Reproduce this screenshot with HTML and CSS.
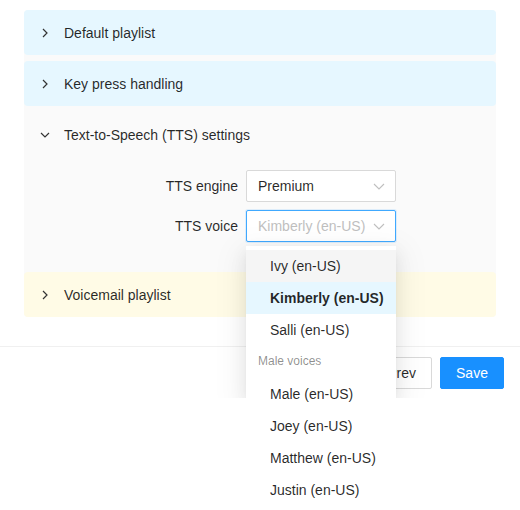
FILE: index.html
```html
<!DOCTYPE html>
<html>
<head>
<meta charset="utf-8">
<title>TTS settings</title>
<link rel="stylesheet" href="styles.css">
</head>
<body>
<div class="modal">
  <div class="modal-body">
    <div class="collapse">
      <div class="panel blue">
        <div class="head">
          <svg class="arrow" width="10" height="10" viewBox="0 0 10 10"><path d="M3 1 L7 5 L3 9" fill="none" stroke="#333" stroke-width="1.2"/></svg>
          Default playlist
        </div>
      </div>
      <div class="panel blue">
        <div class="head">
          <svg class="arrow" width="10" height="10" viewBox="0 0 10 10"><path d="M3 1 L7 5 L3 9" fill="none" stroke="#333" stroke-width="1.2"/></svg>
          Key press handling
        </div>
      </div>
      <div class="panel open">
        <div class="head">
          <svg class="arrow" width="10" height="10" viewBox="0 0 10 10"><path d="M1 3 L5 7 L9 3" fill="none" stroke="#333" stroke-width="1.2"/></svg>
          Text-to-Speech (TTS) settings
        </div>
        <div class="content">
          <div class="row">
            <label>TTS engine</label>
            <div class="select">
              <span>Premium</span>
              <svg class="caret" width="12" height="12" viewBox="0 0 12 12"><path d="M1 4 L6 9 L11 4" fill="none" stroke="#bfbfbf" stroke-width="1.1"/></svg>
            </div>
          </div>
          <div class="row">
            <label>TTS voice</label>
            <div class="select focus">
              <span class="ph">Kimberly (en-US)</span>
              <svg class="caret" width="12" height="12" viewBox="0 0 12 12"><path d="M1 4 L6 9 L11 4" fill="none" stroke="#bfbfbf" stroke-width="1.1"/></svg>
              <div class="dropdown">
                <div class="opt hover">Ivy (en-US)</div>
                <div class="opt sel">Kimberly (en-US)</div>
                <div class="opt">Salli (en-US)</div>
                <div class="group">Male voices</div>
                <div class="opt">Male (en-US)</div>
                <div class="opt">Joey (en-US)</div>
                <div class="opt">Matthew (en-US)</div>
                <div class="opt">Justin (en-US)</div>
              </div>
            </div>
          </div>
        </div>
      </div>
      <div class="panel yellow">
        <div class="head">
          <svg class="arrow" width="10" height="10" viewBox="0 0 10 10"><path d="M3 1 L7 5 L3 9" fill="none" stroke="#333" stroke-width="1.2"/></svg>
          Voicemail playlist
        </div>
      </div>
    </div>
  </div>
  <div class="footer">
    <button class="btn">Prev</button>
    <button class="btn primary">Save</button>
  </div>
</div>
</body>
</html>
```

FILE: styles.css
```css
*{margin:0;padding:0;box-sizing:border-box;}
html,body{min-height:510px;}
body{font:14px "Liberation Sans",Arial,sans-serif;color:rgba(0,0,0,.85);background:#fff;}

.modal{
	width:520px;
	background:#fff;
}
.modal-body{
	padding:10px 24px 29px;
}
.collapse{
	display:flex;
	flex-direction:column;
	gap:6px;
	background:#fafafa;
	border-radius:4px;
}
.panel{
	border-radius:4px;
}
.panel.blue{background:#e6f7ff;}
.panel.yellow{background:#fffbe6;}
.head{
	height:45px;
	display:flex;
	align-items:center;
	padding-left:40px;
	position:relative;
}
.arrow{
	position:absolute;
	left:16px;
	top:18px;
}
.content{
	padding:13px 0 24px;
	display:flex;
	flex-direction:column;
	gap:8px;
}
.row{
	display:flex;
	align-items:center;
}
.row label{
	width:222px;
	text-align:right;
	padding-right:8px;
}
.select{
	width:150px;
	height:32px;
	border:1px solid #d9d9d9;
	border-radius:2px;
	background:#fff;
	display:flex;
	align-items:center;
	justify-content:space-between;
	padding:0 11px;
	position:relative;
}
.select.focus{
	border-color:#40a9ff;
	box-shadow:0 0 0 1px rgba(24,144,255,.12);
}
.select .ph{color:#bfbfbf;}
.caret{margin-right:-1px;}

.dropdown{
	position:absolute;
	top:35px;
	left:-1px;
	width:150px;
	background:#fff;
	padding:4px 0;
	z-index:5;
}
.dropdown:before{
	content:'';
	position:absolute;
	left:0;
	top:0;
	width:100%;
	height:152px;
	z-index:-1;
	box-shadow:0 3px 6px -4px rgba(0,0,0,.12),0 6px 16px 0 rgba(0,0,0,.08),0 9px 28px 8px rgba(0,0,0,.05);
	clip-path:inset(-40px -40px 0 -40px);
}
.opt{
	height:32px;
	line-height:32px;
	padding-left:24px;
	background:#fff;
	color:rgba(0,0,0,.85);
}
.opt.hover{background:#f5f5f5;}
.opt.sel{background:#e6f7ff;font-weight:bold;}
.group{
	height:32px;
	line-height:30px;
	padding-left:12px;
	font-size:12px;
	color:rgba(0,0,0,.45);
	background:#fff;
}

.footer{
	border-top:1px solid #f0f0f0;
	padding:10px 16px;
	display:flex;
	justify-content:flex-end;
	gap:8px;
}
.btn{
	height:32px;
	padding:0 15px;
	border:1px solid #d9d9d9;
	border-radius:2px;
	background:#fff;
	font:14px "Liberation Sans",Arial,sans-serif;
	color:rgba(0,0,0,.85);
}
.btn.primary{
	background:#1890ff;
	border-color:#1890ff;
	color:#fff;
	width:64px;
}
```
